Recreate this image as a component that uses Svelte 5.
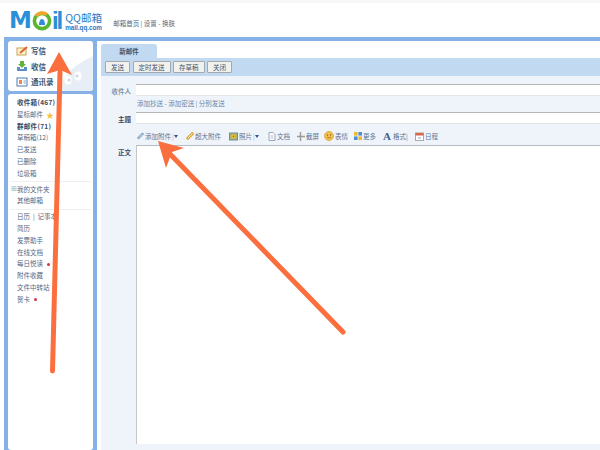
<script lang="ts">
	const mailRows = [
		{ label: '收件箱(467)', bold: true },
		{ label: '星标邮件', star: true },
		{ label: '群邮件(71)', bold: true },
		{ label: '草稿箱(12)' },
		{ label: '已发送' },
		{ label: '已删除' },
		{ label: '垃圾箱' }
	];
	const toolRows = [
		{ label: '简历' },
		{ label: '发票助手' },
		{ label: '在线文档' },
		{ label: '每日悦读', dot: true },
		{ label: '附件收藏' },
		{ label: '文件中转站' },
		{ label: '贺卡', dot: true }
	];
	const buttons = ['发送', '定时发送', '存草稿', '关闭'];
</script>

<div class="page">
	<div class="topstrip"></div>
	<header class="header">
		<div class="logo">
			<span class="logo-m">M</span>
			<svg class="logo-o" viewBox="0 0 20 20" width="20" height="20">
				<circle cx="10" cy="10" r="7.6" fill="none" stroke="#5cb531" stroke-width="3.6" />
				<path d="M4 5A8 8 0 0 1 15 3.500" fill="none" stroke="#f3a62b" stroke-width="3.400" />
				<path d="M7 14c0-3 1-6 3-6s3 3 3 6z" fill="#2a8fd8" />
			</svg>
			<span class="logo-il">il</span>
			<div class="logo-side">
				<span class="logo-qq">QQ邮箱</span>
				<span class="logo-url">mail.qq.com</span>
			</div>
		</div>
		<nav class="header-nav">邮箱首页 | 设置 - 换肤</nav>
	</header>

	<div class="frame">
		<aside class="sidebar">
			<div class="card actions">
				<svg class="penguin" viewBox="0 0 33 36" width="33" height="36">
					<path d="M0 36C1 26 6 14 33 1v35z" fill="#e8eef5" />
					<ellipse cx="8" cy="25" rx="3.500" ry="4.500" fill="#fff" />
					<ellipse cx="18" cy="21" rx="3.500" ry="4.500" fill="#fff" />
					<circle cx="9" cy="25" r="1.600" fill="#ccd7e3" />
					<circle cx="17" cy="21" r="1.600" fill="#ccd7e3" />
				</svg>
				<div class="action">
					<svg viewBox="0 0 12 12" width="12" height="12">
						<rect x="1" y="3" width="9" height="7" fill="#fdf3d0" stroke="#c9a34e" />
						<path d="M4 8l7-6" stroke="#e2632e" stroke-width="2" />
					</svg>
					<span>写信</span>
				</div>
				<div class="action">
					<svg viewBox="0 0 12 12" width="12" height="12">
						<path d="M1 7h3v2h4V7h3v4H1z" fill="#5b8fc9" />
						<path d="M4 1h4v3h2L6 8 2 4h2z" fill="#62b33c" />
					</svg>
					<span>收信</span>
				</div>
				<div class="action">
					<svg viewBox="0 0 12 12" width="12" height="12">
						<rect x="1" y="2" width="10" height="8" fill="#fff" stroke="#4b7db5" />
						<rect x="3" y="4" width="3" height="4" fill="#e58a4e" />
						<path d="M7.500 5H10M7.500 7H10" stroke="#8aa6c6" />
					</svg>
					<span>通讯录</span>
				</div>
			</div>

			<div class="card nav">
				<ul>
					{#each mailRows as row}
						<li class:bold={row.bold}>
							{row.label}
							{#if row.star}<span class="star">★</span>{/if}
						</li>
					{/each}
				</ul>
				<hr />
				<ul>
					<li class="folder"><span class="plus">⊞</span>我的文件夹</li>
					<li>其他邮箱</li>
				</ul>
				<hr />
				<ul>
					<li>日历 &nbsp;|&nbsp; 记事本</li>
					{#each toolRows as row}
						<li>
							{row.label}
							{#if row.dot}<span class="dot"></span>{/if}
						</li>
					{/each}
				</ul>
			</div>
		</aside>

		<main class="main">
			<div class="tabs"><div class="tab">新邮件</div></div>
			<div class="buttons">
				{#each buttons as b}
					<button type="button">{b}</button>
				{/each}
			</div>

			<div class="form">
				<div class="row">
					<span class="label">收件人</span>
					<div class="input"></div>
				</div>
				<div class="links">添加抄送 - 添加密送 | 分别发送</div>
				<div class="row">
					<span class="label dark">主题</span>
					<div class="input"></div>
				</div>

				<div class="toolbar">
					<span class="tool t-attach">
						<svg viewBox="0 0 8 8" width="7" height="8">
							<path d="M6.300 1.700 1.800 6.200" stroke="#7f9fc4" stroke-width="2.800" stroke-linecap="round" />
							<path d="M6 2 2.300 5.700" stroke="#e8eef6" stroke-width="1" stroke-linecap="round" />
						</svg>
						添加附件<i>|</i><b class="caret"></b>
					</span>
					<span class="tool t-big">
						<svg viewBox="0 0 8 8" width="8" height="8">
							<path d="M6.300 1.700 1.800 6.200" stroke="#dfa437" stroke-width="3" stroke-linecap="round" />
							<path d="M6 2 2.300 5.700" stroke="#fbeec8" stroke-width="1" stroke-linecap="round" />
						</svg>
						超大附件
					</span>
					<span class="tool t-photo">
						<svg viewBox="0 0 9 9" width="9" height="9">
							<rect x=".5" y="1" width="8" height="7" fill="#a9b86f" stroke="#6f8aa8" />
							<circle cx="4.500" cy="4.300" r="2" fill="#f0c030" />
							<circle cx="4.500" cy="4.300" r=".8" fill="#8a5a1a" />
						</svg>
						照片<i>|</i><b class="caret"></b>
					</span>
					<span class="tool t-doc">
						<svg viewBox="0 0 8 9" width="8" height="9"><path d="M1 .5h4l2 2v6H1z" fill="#fff" stroke="#9aa8b8" /><path d="M2.500 4h3M2.500 6h3" stroke="#b5c0cc" /></svg>
						文档
					</span>
					<span class="tool t-shot">
						<svg viewBox="0 0 8 9" width="8" height="9"><path d="M3.500 0v9M0 4.500h8" stroke="#9a9a9a" stroke-width="1.400" /></svg>
						截屏
					</span>
					<span class="tool t-face">
						<svg viewBox="0 0 10 10" width="10" height="10"><circle cx="5" cy="5" r="4.500" fill="#f4c14f" stroke="#d99a2b" stroke-width=".7" /><circle cx="3.500" cy="4" r=".7" fill="#8a5a1a" /><circle cx="6.500" cy="4" r=".7" fill="#8a5a1a" /><path d="M3 6.200q2 1.600 4 0" fill="none" stroke="#8a5a1a" stroke-width=".7" /></svg>
						表情
					</span>
					<span class="tool t-more">
						<svg viewBox="0 0 8 8" width="8" height="8"><rect width="3.600" height="3.600" fill="#f2b632" /><rect x="4.400" width="3.600" height="3.600" fill="#4a8fd6" /><rect y="4.400" width="3.600" height="3.600" fill="#4a8fd6" /><rect x="4.400" y="4.400" width="3.600" height="3.600" fill="#f2b632" /></svg>
						更多
					</span>
					<span class="tool t-format"><em>A</em>格式|</span>
					<span class="tool t-cal">
						<svg viewBox="0 0 9 9" width="9" height="9"><rect x=".5" y="1" width="8" height="7.500" fill="#fff" stroke="#a8a8a8" /><rect x=".5" y="1" width="8" height="2.500" fill="#d9694e" /><path d="M3 6h3" stroke="#8aa6c6" /></svg>
						日程
					</span>
				</div>

				<div class="row body">
					<span class="label dark">正文</span>
					<div class="editor"></div>
				</div>
			</div>
		</main>
	</div>

	<svg class="arrows" viewBox="0 0 600 450" width="600" height="450">
		<path d="M52.500 371 60 72" stroke="#fb6f3f" stroke-width="5" stroke-linecap="round" fill="none" />
		<path d="M59 52 47 74 60 70 72 75z" fill="#fb6f3f" />
		<path d="M343 332 170 154" stroke="#fb6f3f" stroke-width="5" stroke-linecap="round" fill="none" />
		<path d="M158 141 184 148 172 152 166 168z" fill="#fb6f3f" />
	</svg>
</div>

<style>
	:global(body) {
		margin: 0;
		background: #fff;
	}

	.page {
		position: relative;
		width: 600px;
		height: 450px;
		overflow: hidden;
		font-family: "Noto Sans CJK SC", "Noto Sans", sans-serif;
		font-size: 6.500px;
		color: #55677f;
		display: flex;
		flex-direction: column;
	}

	.topstrip {
		height: 3px;
		background: #f7f7f7;
		flex: none;
	}

	.header {
		height: 34px;
		flex: none;
		display: flex;
		align-items: flex-start;
	}

	.logo {
		display: flex;
		align-items: center;
		height: 19px;
		margin: 8px 0 0 9px;
	}

	.logo-m {
		font-family: "DejaVu Sans", sans-serif;
		font-weight: 700;
		font-size: 23px;
		line-height: 19px;
		color: #2a8fd8;
	}

	.logo-il {
		font-family: "Liberation Sans", sans-serif;
		font-weight: 700;
		font-size: 24px;
		line-height: 19px;
		letter-spacing: -2px;
		color: #2a8fd8;
	}

	.logo-side {
		display: flex;
		flex-direction: column;
		margin-left: 4px;
		color: #2a78c4;
	}

	.logo-qq {
		font-size: 10.600px;
		line-height: 13px;
		white-space: nowrap;
	}

	.logo-url {
		font-family: "Liberation Sans", sans-serif;
		font-size: 6.300px;
		line-height: 7px;
		font-weight: 700;
		white-space: nowrap;
	}

	.header-nav {
		margin: 15px 0 0 11px;
		line-height: 11px;
		white-space: nowrap;
	}

	.frame {
		flex: 1;
		min-height: 0;
		display: flex;
		background: #fff;
		border-top: 4px solid #86b1e6;
		margin-left: 4px;
	}

	.sidebar {
		width: 85px;
		flex: none;
		background: #86b1e6;
		padding: 0 4px;
		display: flex;
		flex-direction: column;
		gap: 3px;
	}

	.card {
		background: #fff;
		border-radius: 3px;
	}

	.actions {
		position: relative;
		height: 50px;
		overflow: hidden;
		padding-top: 2px;
		box-sizing: border-box;
	}

	.penguin {
		position: absolute;
		right: 0;
		bottom: 0;
	}

	.action {
		position: relative;
		display: flex;
		align-items: center;
		gap: 3px;
		height: 15.500px;
		padding-left: 8px;
		font-size: 7.500px;
		font-weight: 700;
		color: #44536c;
	}

	.nav {
		flex: 1;
		padding: 3px 0 0 9px;
	}

	ul {
		list-style: none;
		margin: 0;
		padding: 0;
	}

	li {
		height: 11.800px;
		line-height: 11.800px;
		white-space: nowrap;
		display: flex;
		align-items: center;
		gap: 3px;
	}

	li.bold {
		font-weight: 700;
		color: #3a4a63;
		letter-spacing: 0.3px;
	}

	.folder {
		margin-left: -6px;
		gap: 0;
	}

	.plus {
		font-size: 7px;
		color: #9aa;
		font-family: "DejaVu Sans", sans-serif;
	}

	.star {
		color: #f4bf3c;
		font-size: 8px;
	}

	.dot {
		width: 3px;
		height: 3px;
		border-radius: 50%;
		background: #d8343c;
		margin-left: 1px;
	}

	hr {
		border: 0;
		height: 1px;
		background: #eef0ef;
		margin: 1.500px 2px 1.500px -7px;
	}

	.main {
		flex: 1;
		min-width: 0;
		margin-left: 4px;
		display: flex;
		flex-direction: column;
		background: #eff4fb;
	}

	.tabs {
		height: 17px;
		background: #fff;
		display: flex;
		align-items: flex-end;
	}

	.tab {
		width: 56px;
		height: 14px;
		background: #c2d9f2;
		border-radius: 3px 3px 0 0;
		text-align: center;
		line-height: 15px;
		font-weight: 700;
		color: #44536c;
	}

	.buttons {
		height: 18px;
		background: #c2d9f2;
		display: flex;
		align-items: center;
		gap: 2.500px;
		padding-left: 4px;
	}

	button {
		height: 12px;
		padding: 0 5px;
		margin: 0;
		border: 1px solid #a3a9ae;
		background: #f1f1ee;
		border-radius: 1px;
		font: inherit;
		line-height: 10px;
		color: #44536c;
		white-space: nowrap;
	}

	.form {
		flex: 1;
		min-height: 0;
		padding-top: 8px;
		display: flex;
		flex-direction: column;
	}

	.row {
		display: flex;
		align-items: flex-start;
		height: 12px;
	}

	.label {
		width: 30px;
		flex: none;
		text-align: right;
		margin-right: 5px;
		height: 12px;
		line-height: 14px;
		white-space: nowrap;
	}

	.label.dark {
		color: #3a4a63;
		font-weight: 700;
	}

	.input {
		flex: 1;
		height: 10px;
		background: #fff;
		border-top: 1px solid #b4b7ba;
		border-bottom: 1px solid #e4e6e8;
	}

	.links {
		height: 16px;
		line-height: 15px;
		padding-left: 36px;
		color: #6985a8;
	}

	.toolbar {
		height: 21px;
		display: flex;
		align-items: center;
		padding: 3px 0 0 36px;
		box-sizing: border-box;
		color: #5d7594;
	}

	.tool {
		display: flex;
		align-items: center;
		gap: 1px;
		white-space: nowrap;
		flex: none;
	}

	.tool i {
		font-style: normal;
		color: #9fb1c5;
	}

	.caret {
		width: 0;
		height: 0;
		margin-left: -1px;
		border: 2.500px solid transparent;
		border-top: 3px solid #33558a;
		border-bottom: 0;
	}

	.t-attach { width: 49px; }
	.t-big { width: 43px; }
	.t-photo { width: 39px; }
	.t-doc { width: 29px; }
	.t-shot { width: 27px; }
	.t-face { width: 30px; }
	.t-more { width: 29px; }
	.t-format { width: 32px; }

	.t-format em {
		font-family: "Liberation Serif", serif;
		font-style: normal;
		font-weight: 700;
		font-size: 11px;
		line-height: 10px;
		color: #3b5e93;
		margin-right: 1px;
	}

	.body {
		flex: 1;
		height: auto;
		min-height: 0;
		margin-bottom: 6px;
	}

	.editor {
		flex: 1;
		height: 100%;
		background: #fff;
		border-top: 1px solid #b9bcbf;
		border-left: 1px solid #c4c7ca;
		box-sizing: border-box;
	}

	.arrows {
		position: absolute;
		left: 0;
		top: 0;
		pointer-events: none;
	}
</style>
